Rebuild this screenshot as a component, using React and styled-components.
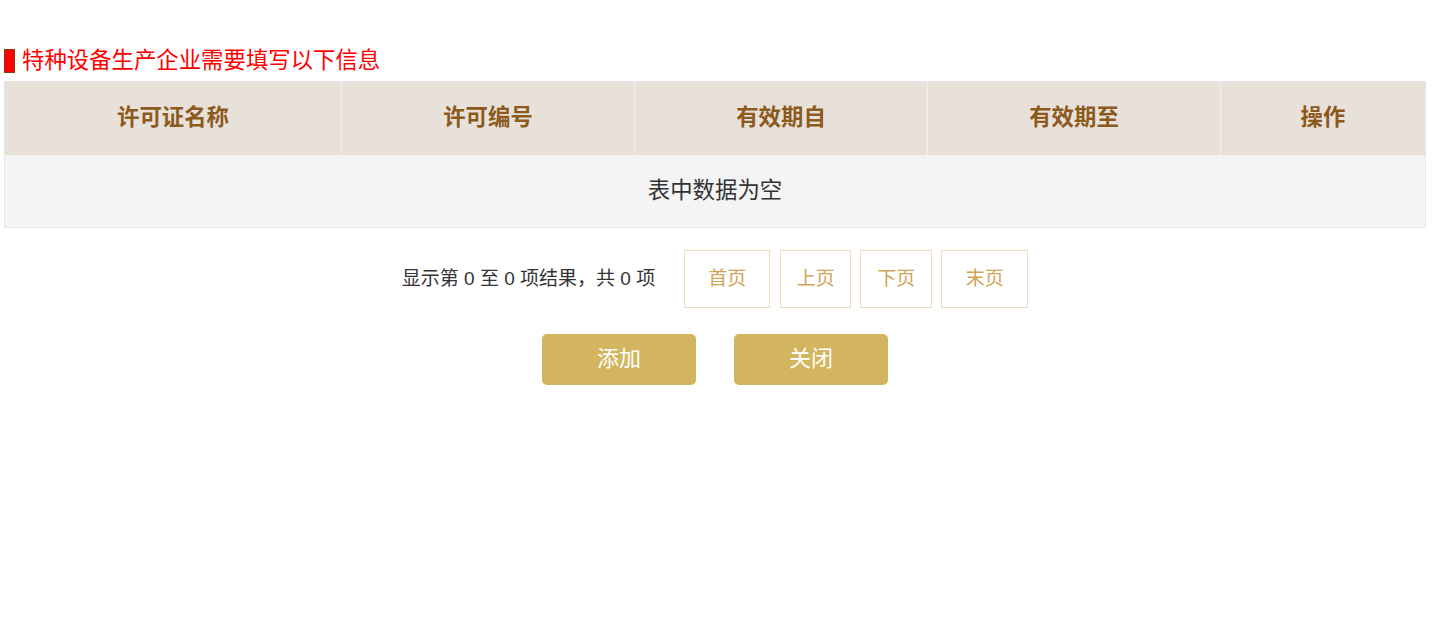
import React from "react";
import styled, { createGlobalStyle } from "styled-components";

const GlobalStyle = createGlobalStyle`
  html, body {
    margin: 0;
    padding: 0;
    background: #fff;
    font-family: "Liberation Sans", "Noto Sans CJK SC", sans-serif;
  }
`;

const columns = [
  { title: "许可证名称", width: "336px" },
  { title: "许可编号", width: "292px" },
  { title: "有效期自", width: "292px" },
  { title: "有效期至", width: "292px" },
  { title: "操作", width: "auto" }
];

const pages = [
  { label: "首页", width: 86 },
  { label: "上页", width: 71 },
  { label: "下页", width: 72 },
  { label: "末页", width: 87 }
];

function App() {
  return (
    <Page>
      <GlobalStyle />
      <SectionTitle>
        <Marker />
        <TitleText>特种设备生产企业需要填写以下信息</TitleText>
      </SectionTitle>
      <Table>
        <thead>
          <tr>
            {columns.map((c) => (
              <HeadCell key={c.title} $width={c.width}>
                {c.title}
              </HeadCell>
            ))}
          </tr>
        </thead>
        <tbody>
          <tr>
            <EmptyCell colSpan={5}>表中数据为空</EmptyCell>
          </tr>
        </tbody>
      </Table>
      <Pager>
        <PagerInfo>显示第 0 至 0 项结果，共 0 项</PagerInfo>
        <PagerButtons>
          {pages.map((p) => (
            <PageButton key={p.label} $width={p.width}>
              {p.label}
            </PageButton>
          ))}
        </PagerButtons>
      </Pager>
      <Actions>
        <ActionButton>添加</ActionButton>
        <ActionButton>关闭</ActionButton>
      </Actions>
    </Page>
  );
}

const Page = styled.div`
  padding: 47px 6px 0 4px;
`;

const SectionTitle = styled.div`
  display: flex;
  align-items: center;
  gap: 7px;
  height: 28px;
  margin-bottom: 6px;
`;

const Marker = styled.span`
  width: 9px;
  height: 22px;
  background: #ff0000;
  border: 1px solid #8a3a10;
`;

const TitleText = styled.span`
  color: #ff0000;
  font-size: 22.4px;
  line-height: 28px;
`;

const Table = styled.table`
  width: 100%;
  box-sizing: border-box;
  border-collapse: collapse;
  table-layout: fixed;
  border: 1px solid #e6e6e6;
`;

const HeadCell = styled.th`
  width: ${(p) => p.$width};
  height: 66px;
  padding: 0 0 7px;
  background: #e8e1da;
  color: #8b5a1c;
  font-size: 22.4px;
  font-weight: 700;
  text-align: center;
  border-left: 1px solid #f3efeb;
  &:first-child {
    border-left: none;
  }
`;

const EmptyCell = styled.td`
  height: 66px;
  padding: 0 0 6px;
  background: #f4f4f4;
  color: #333;
  font-size: 22.4px;
  text-align: center;
`;

const Pager = styled.div`
  display: flex;
  justify-content: center;
  align-items: center;
  gap: 29px;
  margin-top: 22px;
`;

const PagerInfo = styled.span`
  color: #333;
  font-size: 19px;
  padding-bottom: 6px;
`;

const PagerButtons = styled.div`
  display: flex;
  gap: 9px;
`;

const PageButton = styled.div`
  box-sizing: border-box;
  width: ${(p) => p.$width}px;
  height: 58px;
  padding-bottom: 6px;
  display: flex;
  align-items: center;
  justify-content: center;
  border: 1px solid #ecdcc0;
  color: #d0a355;
  font-size: 19px;
  background: #fff;
  &:first-child {
    margin-right: 1px;
  }
`;

const Actions = styled.div`
  display: flex;
  justify-content: center;
  gap: 38px;
  margin-top: 26px;
`;

const ActionButton = styled.button`
  width: 154px;
  height: 51px;
  border: none;
  border-radius: 5px;
  background: #d4b55f;
  color: #fff;
  font-family: "Liberation Sans", "Noto Sans CJK SC", sans-serif;
  font-size: 22px;
  padding: 0 0 7px;
`;

export default App;
